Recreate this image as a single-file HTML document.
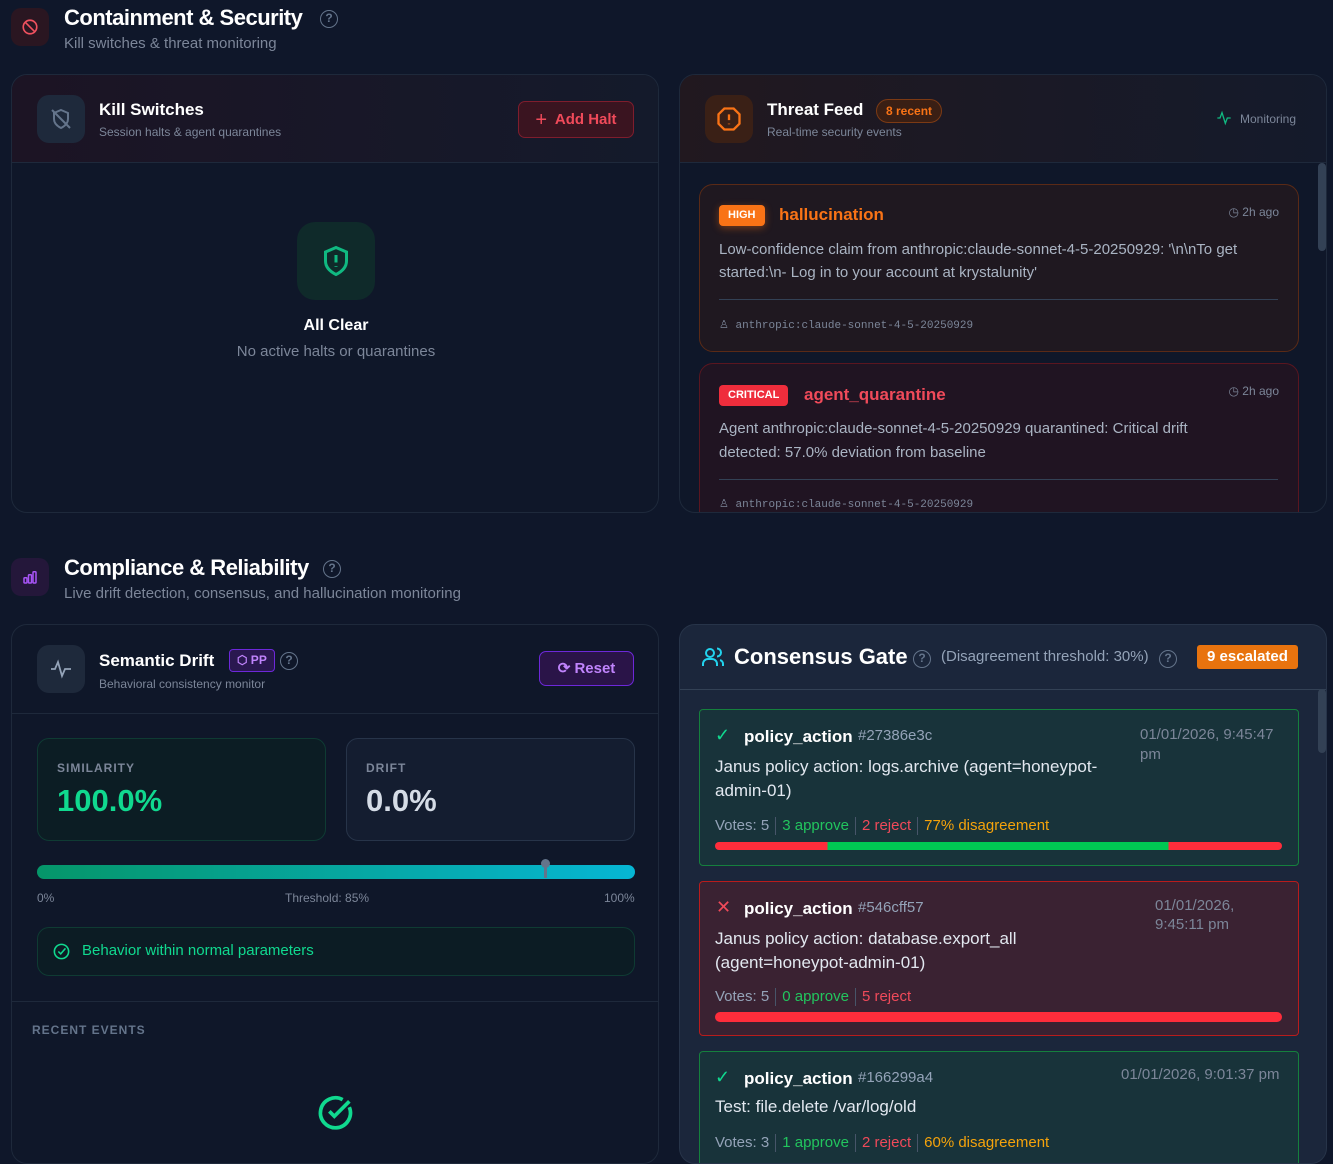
<!DOCTYPE html>
<html><head><meta charset="utf-8"><style>
*{box-sizing:border-box;margin:0;padding:0}
body{width:1333px;height:1149px;overflow:hidden;background:#0f172a;font-family:"Liberation Sans",sans-serif;color:#e2e8f0;position:relative}
.a{position:absolute}
.h1{font-size:22px;font-weight:bold;color:#fff;letter-spacing:-0.5px}
.sub{font-size:15px;color:#7c8699}
.card{position:absolute;border:1px solid #1e293b;border-radius:16px;overflow:hidden;background:#0f1729}
.t{font-size:17px;font-weight:bold;color:#fff}
.s{font-size:12px;color:#7c8699}
.mono{font-family:"Liberation Mono",monospace;font-size:11px;color:#7c8699}
.ibox{position:absolute;border-radius:12px;display:flex;align-items:center;justify-content:center}
.q{display:inline-block;width:18px;height:18px;border:1.5px solid #64748b;border-radius:50%;color:#64748b;font-size:12px;text-align:center;line-height:15px;font-weight:bold}
.ev{position:absolute;left:19px;width:600px;border-radius:14px}
.cg{position:absolute;left:19px;width:600px;border-radius:4px}
.vote{font-size:15px;color:#94a3b8}
.sep{display:inline-block;width:1px;height:18px;background:#475569;vertical-align:middle;margin:0 6px}
</style></head><body>

<div class="ibox" style="left:11px;top:8px;width:38px;height:38px;background:#2a1621;border-radius:10px">
<svg width="18" height="18" viewBox="0 0 24 24" fill="none" stroke="#f0515f" stroke-width="2.2"><circle cx="12" cy="12" r="9"/><path d="M5.7 5.7l12.6 12.6"/></svg></div>
<div class="a h1" style="left:64px;top:5px">Containment &amp; Security</div>
<div class="a" style="left:320px;top:9px"><span class="q">?</span></div>
<div class="a sub" style="left:64px;top:35px">Kill switches &amp; threat monitoring</div>

<div class="card" style="left:11px;top:74px;width:648px;height:439px">
 <div class="a" style="left:0;top:0;width:648px;height:88px;background:linear-gradient(90deg,#1c1424,#141a2b);border-bottom:1px solid #1e293b"></div>
 <div class="ibox" style="left:25px;top:20px;width:48px;height:48px;background:#1e293b">
 <svg width="24" height="24" viewBox="0 0 24 24" fill="none" stroke="#64748b" stroke-width="2"><path d="M12 3l7 3v6c0 4-3 7-7 9-4-2-7-5-7-9V6z"/><path d="M3 3l18 18"/></svg></div>
 <div class="a t" style="left:87px;top:25px">Kill Switches</div>
 <div class="a s" style="left:87px;top:50px">Session halts &amp; agent quarantines</div>
 <div class="a" style="left:506px;top:26px;width:116px;height:37px;border:1px solid #7f1d2d;background:#3a1420;border-radius:7px;color:#f04a5a;font-size:15px;font-weight:bold;line-height:35px;text-align:center"><span style="font-weight:normal;font-size:20px;vertical-align:-2px">+</span>&nbsp; Add Halt</div>
 <div class="ibox" style="left:285px;top:147px;width:78px;height:78px;background:#0f2a2a;border-radius:18px">
 <svg width="36" height="36" viewBox="0 0 24 24" fill="none" stroke="#10b981" stroke-width="2"><path d="M12 3l7 3v6c0 4-3 7-7 9-4-2-7-5-7-9V6z"/><path d="M12 8v5M12 15.5v.5"/></svg></div>
 <div class="a" style="left:0;width:648px;top:242px;text-align:center;font-size:16px;font-weight:bold;color:#fff">All Clear</div>
 <div class="a" style="left:0;width:648px;top:268px;text-align:center;font-size:15px;color:#7c8699">No active halts or quarantines</div>
</div>

<div class="card" style="left:679px;top:74px;width:648px;height:439px">
 <div class="a" style="left:0;top:0;width:648px;height:88px;background:linear-gradient(90deg,#21181f,#141a2b);border-bottom:1px solid #1e293b"></div>
 <div class="ibox" style="left:25px;top:20px;width:48px;height:48px;background:#3a2016">
 <svg width="28" height="28" viewBox="0 0 24 24" fill="none" stroke="#f97316" stroke-width="2"><path d="M8 3h8l5 5v8l-5 5H8l-5-5V8z"/><path d="M12 8v5M12 16v.5"/></svg></div>
 <div class="a t" style="left:87px;top:25px">Threat Feed</div>
 <div class="a" style="left:196px;top:24px;height:24px;padding:0 9px;border:1px solid #7c3a14;background:#3a1f14;border-radius:12px;color:#f97316;font-size:12px;font-weight:bold;line-height:22px">8 recent</div>
 <div class="a s" style="left:87px;top:50px">Real-time security events</div>
 <svg class="a" style="left:536px;top:35px" width="16" height="16" viewBox="0 0 24 24" fill="none" stroke="#10b981" stroke-width="2"><path d="M2 12h4l3-8 5 16 3-8h5"/></svg>
 <div class="a s" style="left:560px;top:37px;color:#7c8699">Monitoring</div>
 <div class="a" style="left:638px;top:88px;width:8px;height:88px;background:#334155;border-radius:4px"></div>
 <div class="ev" style="top:109px;height:168px;border:1px solid #5a2a16;background:#1f1820">
  <div class="a" style="left:19px;top:20px;height:21px;padding:0 9px;background:#f97316;border-radius:4px;color:#fff;font-size:11px;font-weight:bold;line-height:21px;box-shadow:0 2px 8px rgba(249,115,22,.4)">HIGH</div>
  <div class="a" style="left:79px;top:20px;font-size:17px;font-weight:bold;color:#f97316">hallucination</div>
  <div class="a" style="right:19px;top:20px;font-size:12px;color:#7c8699">◷ 2h ago</div>
  <div class="a" style="left:19px;top:53px;width:560px;font-size:15px;line-height:23px;color:#aab4c3">Low-confidence claim from anthropic:claude-sonnet-4-5-20250929: '\n\nTo get started:\n- Log in to your account at krystalunity'</div>
  <div class="a" style="left:19px;top:114px;width:559px;height:1px;background:#334155"></div>
  <div class="a mono" style="left:19px;top:133px">♙ anthropic:claude-sonnet-4-5-20250929</div>
 </div>
 <div class="ev" style="top:288px;height:170px;border:1px solid #5a1620;background:#201422">
  <div class="a" style="left:19px;top:21px;height:21px;padding:0 9px;background:#ef2d3c;border-radius:4px;color:#fff;font-size:11px;font-weight:bold;line-height:21px">CRITICAL</div>
  <div class="a" style="left:104px;top:21px;font-size:17px;font-weight:bold;color:#f04a5a">agent_quarantine</div>
  <div class="a" style="right:19px;top:20px;font-size:12px;color:#7c8699">◷ 2h ago</div>
  <div class="a" style="left:19px;top:53px;width:520px;font-size:15px;line-height:24px;color:#aab4c3">Agent anthropic:claude-sonnet-4-5-20250929 quarantined: Critical drift detected: 57.0% deviation from baseline</div>
  <div class="a" style="left:19px;top:115px;width:559px;height:1px;background:#334155"></div>
  <div class="a mono" style="left:19px;top:133px">♙ anthropic:claude-sonnet-4-5-20250929</div>
 </div>
</div>

<div class="ibox" style="left:11px;top:558px;width:38px;height:38px;background:#24173a;border-radius:10px">
<svg width="18" height="18" viewBox="0 0 24 24" fill="none" stroke="#a855f7" stroke-width="2"><rect x="4" y="13" width="4" height="7" rx="1"/><rect x="10" y="9" width="4" height="11" rx="1"/><rect x="16" y="5" width="4" height="15" rx="1"/></svg></div>
<div class="a h1" style="left:64px;top:555px">Compliance &amp; Reliability</div>
<div class="a" style="left:323px;top:559px"><span class="q">?</span></div>
<div class="a sub" style="left:64px;top:585px">Live drift detection, consensus, and hallucination monitoring</div>

<div class="card" style="left:11px;top:624px;width:648px;height:540px">
 <div class="a" style="left:0;top:88px;width:648px;height:1px;background:#1e293b"></div>
 <div class="ibox" style="left:25px;top:20px;width:48px;height:48px;background:#1e293b">
 <svg width="24" height="24" viewBox="0 0 24 24" fill="none" stroke="#94a3b8" stroke-width="1.8"><path d="M2 12h4l3-7 4 14 3-7h6"/></svg></div>
 <div class="a t" style="left:87px;top:26px">Semantic Drift</div>
 <div class="a" style="left:217px;top:24px;height:23px;padding:0 7px;border:1px solid #6d28d9;background:#2a1850;border-radius:4px;color:#c084fc;font-size:12px;font-weight:bold;line-height:21px">⬡ PP</div>
 <div class="a" style="left:268px;top:26px"><span class="q">?</span></div>
 <div class="a s" style="left:87px;top:52px">Behavioral consistency monitor</div>
 <div class="a" style="left:527px;top:26px;width:95px;height:35px;border:1px solid #6d28d9;background:#2a1448;border-radius:7px;color:#c084fc;font-size:15px;font-weight:bold;line-height:33px;text-align:center">⟳ Reset</div>
 <div class="a" style="left:25px;top:113px;width:289px;height:103px;border:1px solid #0f3b33;background:#0c1d24;border-radius:12px">
  <div class="a" style="left:19px;top:22px;font-size:12px;font-weight:bold;letter-spacing:1px;color:#7c8699">SIMILARITY</div>
  <div class="a" style="left:19px;top:44px;font-size:31px;font-weight:bold;color:#10d98f">100.0%</div>
 </div>
 <div class="a" style="left:334px;top:113px;width:289px;height:103px;border:1px solid #273449;background:#141d30;border-radius:12px">
  <div class="a" style="left:19px;top:22px;font-size:12px;font-weight:bold;letter-spacing:1px;color:#7c8699">DRIFT</div>
  <div class="a" style="left:19px;top:44px;font-size:31px;font-weight:bold;color:#d5dce6">0.0%</div>
 </div>
 <div class="a" style="left:25px;top:240px;width:598px;height:14px;border-radius:7px;background:linear-gradient(90deg,#059669,#06b6d4)"></div>
 <div class="a" style="left:532px;top:235px;width:3px;height:18px;background:#64748b"></div>
 <div class="a" style="left:529px;top:234px;width:9px;height:9px;border-radius:50%;background:#64748b"></div>
 <div class="a s" style="left:25px;top:266px">0%</div>
 <div class="a s" style="left:273px;top:266px">Threshold: 85%</div>
 <div class="a s" style="left:592px;top:266px">100%</div>
 <div class="a" style="left:25px;top:302px;width:598px;height:49px;border:1px solid #0f3b33;background:#0c1c24;border-radius:12px">
  <svg class="a" style="left:14px;top:14px" width="19" height="19" viewBox="0 0 24 24" fill="none" stroke="#10d98f" stroke-width="2"><circle cx="12" cy="12" r="9"/><path d="M8 12l3 3 6-7"/></svg>
  <div class="a" style="left:44px;top:14px;font-size:15px;color:#10d98f">Behavior within normal parameters</div>
 </div>
 <div class="a" style="left:0;top:376px;width:648px;height:1px;background:#1e293b"></div>
 <div class="a" style="left:20px;top:398px;font-size:12px;font-weight:bold;letter-spacing:1px;color:#64748b">RECENT EVENTS</div>
 <svg class="a" style="left:304px;top:468px" width="40" height="40" viewBox="0 0 24 24" fill="none" stroke="#10d98f" stroke-width="2.2"><path d="M20 8.5A9 9 0 1 1 16 4"/><path d="M8 11l3 3 9-9"/></svg>
</div>

<div class="card" style="left:679px;top:624px;width:648px;height:540px;background:#1b263b;border-color:#273449">
 <div class="a" style="left:0;top:64px;width:648px;height:1px;background:#334155"></div>
 <svg class="a" style="left:21px;top:20px" width="24" height="24" viewBox="0 0 24 24" fill="none" stroke="#22d3ee" stroke-width="2"><circle cx="9" cy="8" r="4"/><path d="M2 21v-2a5 5 0 0 1 5-5h4a5 5 0 0 1 5 5v2"/><path d="M16 3.5a4 4 0 0 1 0 8M22 21v-2a4 4 0 0 0-3-3.9"/></svg>
 <div class="a" style="left:54px;top:19px;font-size:22px;font-weight:bold;color:#fff">Consensus Gate</div>
 <div class="a" style="left:233px;top:24px"><span class="q">?</span></div>
 <div class="a" style="left:261px;top:23px;font-size:15px;color:#94a3b8">(Disagreement threshold: 30%)</div>
 <div class="a" style="left:479px;top:24px"><span class="q">?</span></div>
 <div class="a" style="left:517px;top:20px;width:101px;height:24px;background:#e8730e;border-radius:3px;color:#fff;font-size:15px;font-weight:bold;line-height:24px;text-align:center">9 escalated</div>
 <div class="a" style="left:638px;top:64px;width:8px;height:64px;background:#334155;border-radius:4px"></div>

 <div class="cg" style="top:84px;height:157px;border:1px solid #15803d;background:#18333a">
  <div class="a" style="left:15px;top:15px;color:#10d98f;font-size:18px">✓</div>
  <div class="a" style="left:44px;top:17px;font-size:17px;font-weight:bold;color:#fff">policy_action</div>
  <div class="a" style="left:158px;top:17px;font-size:15px;color:#94a3b8">#27386e3c</div>
  <div class="a" style="left:440px;top:15px;width:145px;font-size:15px;line-height:20px;color:#7c8699">01/01/2026, 9:45:47 pm</div>
  <div class="a" style="left:15px;top:45px;width:420px;font-size:17px;line-height:24px;color:#e2e8f0">Janus policy action: logs.archive (agent=honeypot-admin-01)</div>
  <div class="a vote" style="left:15px;top:107px">Votes: 5<span class="sep"></span><span style="color:#22c55e">3 approve</span><span class="sep"></span><span style="color:#f04a5a">2 reject</span><span class="sep"></span><span style="color:#f5a30b">77% disagreement</span></div>
  <div class="a" style="left:15px;top:132px;width:567px;height:8px;border-radius:4px;background:linear-gradient(90deg,#ff2d3b 0 19.8%,#00c853 19.8% 80%,#ff2d3b 80%)"></div>
 </div>

 <div class="cg" style="top:256px;height:155px;border:1px solid #b91c1c;background:#3a2232">
  <div class="a" style="left:16px;top:15px;color:#f04a5a;font-size:18px">✕</div>
  <div class="a" style="left:44px;top:17px;font-size:17px;font-weight:bold;color:#fff">policy_action</div>
  <div class="a" style="left:158px;top:17px;font-size:15px;color:#94a3b8">#546cff57</div>
  <div class="a" style="left:455px;top:14px;width:120px;font-size:15px;line-height:19px;color:#7c8699">01/01/2026, 9:45:11 pm</div>
  <div class="a" style="left:15px;top:45px;width:430px;font-size:17px;line-height:24px;color:#e2e8f0">Janus policy action: database.export_all (agent=honeypot-admin-01)</div>
  <div class="a vote" style="left:15px;top:106px">Votes: 5<span class="sep"></span><span style="color:#22c55e">0 approve</span><span class="sep"></span><span style="color:#f04a5a">5 reject</span></div>
  <div class="a" style="left:15px;top:130px;width:567px;height:10px;border-radius:5px;background:#ff2d3b"></div>
 </div>

 <div class="cg" style="top:426px;height:130px;border:1px solid #15803d;background:#18333a">
  <div class="a" style="left:15px;top:15px;color:#10d98f;font-size:18px">✓</div>
  <div class="a" style="left:44px;top:17px;font-size:17px;font-weight:bold;color:#fff">policy_action</div>
  <div class="a" style="left:158px;top:17px;font-size:15px;color:#94a3b8">#166299a4</div>
  <div class="a" style="left:421px;top:14px;font-size:15px;color:#7c8699">01/01/2026, 9:01:37 pm</div>
  <div class="a" style="left:15px;top:45px;font-size:17px;color:#e2e8f0">Test: file.delete /var/log/old</div>
  <div class="a vote" style="left:15px;top:82px">Votes: 3<span class="sep"></span><span style="color:#22c55e">1 approve</span><span class="sep"></span><span style="color:#f04a5a">2 reject</span><span class="sep"></span><span style="color:#f5a30b">60% disagreement</span></div>
 </div>
</div>
</body></html>
